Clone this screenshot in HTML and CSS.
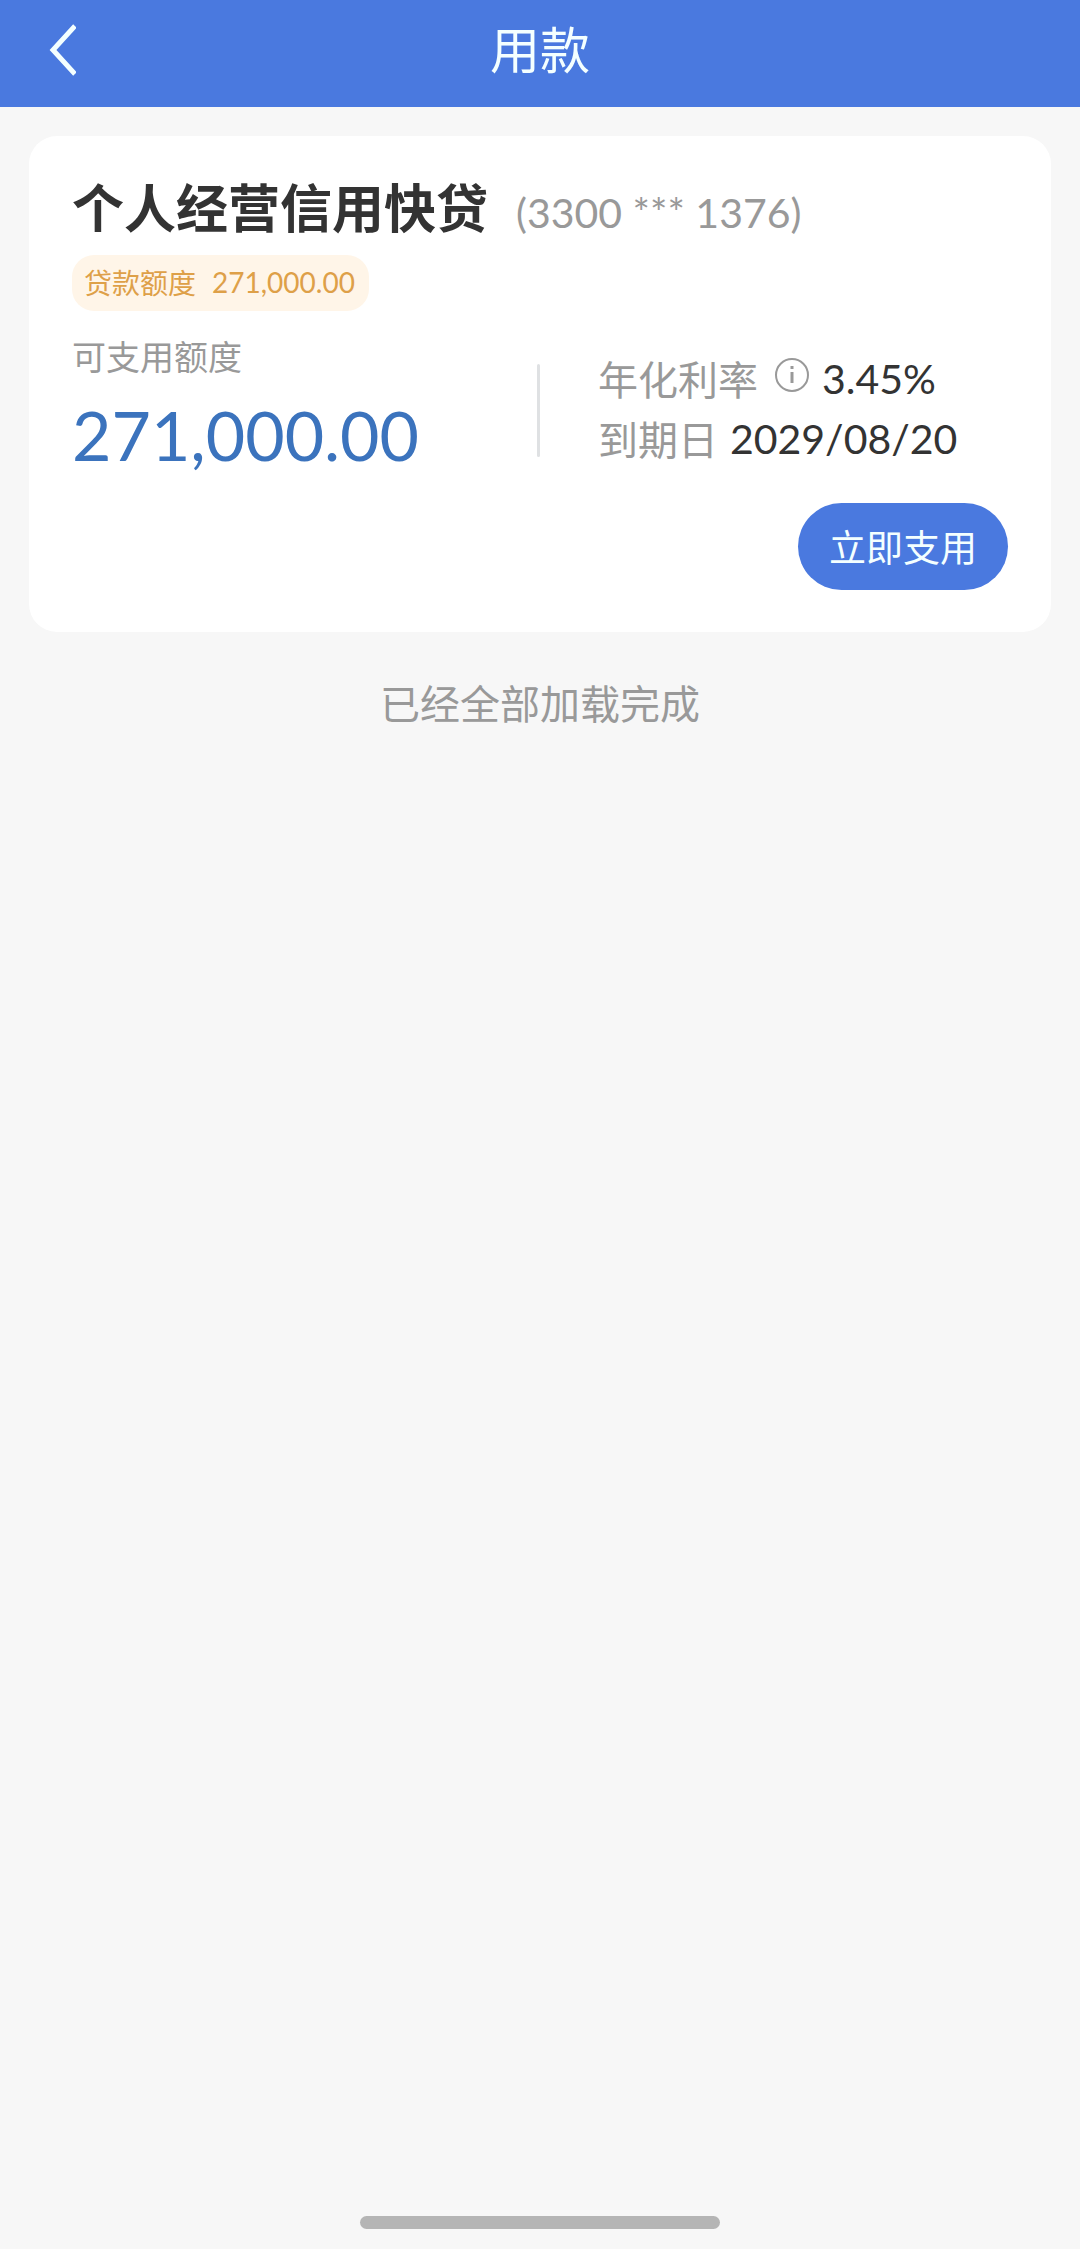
FILE: index.html
```html
<!DOCTYPE html>
<html lang="zh-CN">
<head>
    <meta charset="UTF-8">
    <meta name="viewport" content="width=device-width, initial-scale=1.0">
    <title>用款</title>
    <link rel="stylesheet" href="styles.css">
</head>
<body>
    <header class="nav-bar">
        <button class="back-btn" type="button" aria-label="返回">
            <svg width="28" height="54" viewBox="0 0 28 54" fill="none" stroke="currentColor" stroke-width="5">
                <path d="M27 3 L5 27 L27 51"/>
            </svg>
        </button>
        <h1 class="nav-title">用款</h1>
    </header>

    <main class="content">
        <section class="loan-card">
            <div class="loan-head">
                <h2 class="loan-name">个人经营信用快贷</h2>
                <span class="loan-account">(3300 *** 1376)</span>
            </div>
            <div class="loan-tag">
                <span>贷款额度</span>
                <span>271,000.00</span>
            </div>

            <div class="loan-body">
                <div class="available">
                    <p class="available-label">可支用额度</p>
                    <p class="available-amount">271,000.00</p>
                </div>
                <div class="loan-info">
                    <div class="info-row">
                        <span class="info-label">年化利率</span>
                        <button class="tip-btn" type="button" aria-label="利率说明">
                            <svg width="36" height="36" viewBox="0 0 36 36" fill="none" stroke="currentColor">
                                <circle cx="18" cy="18" r="16" stroke-width="2"/>
                                <path d="M18 15 V26" stroke-width="3"/>
                                <path d="M18 9 V12" stroke-width="3"/>
                            </svg>
                        </button>
                        <span class="info-value">3.45%</span>
                    </div>
                    <div class="info-row">
                        <span class="info-label">到期日</span>
                        <span class="info-value">2029/08/20</span>
                    </div>
                </div>
            </div>

            <div class="loan-action">
                <button class="use-btn" type="button">立即支用</button>
            </div>
        </section>

        <p class="load-end">已经全部加载完成</p>
    </main>

    <div class="home-bar"></div>
</body>
</html>
```
FILE: styles.css
```css
* {
    box-sizing: border-box;
    margin: 0;
    padding: 0;
}

body {
    display: flex;
    flex-direction: column;
    min-height: 100vh;
    background-color: #f7f7f7;
    color: #333;
    font-family: Lato, "Noto Sans CJK SC", sans-serif;
}

button {
    border: none;
    background: none;
    font-family: inherit;
    cursor: pointer;
}

/* top bar */
.nav-bar {
    display: grid;
    grid-template-columns: 1fr auto 1fr;
    align-items: center;
    padding: 0 48px 8px;
    height: 107px;
    background-color: #4a79df;
    color: #f4ffff;
}

.back-btn {
    display: flex;
    justify-self: start;
    color: inherit;
}

.nav-title {
    font-size: 50px;
    line-height: 60px;
    font-weight: 400;
}

/* loan card */
.content {
    padding: 29px;
}

.loan-card {
    padding: 42px 43px;
    background-color: #fff;
    border-radius: 28px;
}

.loan-head {
    display: flex;
    align-items: baseline;
    gap: 28px;
    line-height: 60px;
}

.loan-name {
    font-size: 52px;
    font-weight: 700;
}

.loan-account {
    font-size: 41px;
    color: #999;
}

.loan-tag {
    display: flex;
    align-items: center;
    gap: 16px;
    width: fit-content;
    height: 56px;
    margin-top: 12px;
    padding: 0 14px 2px 12px;
    border-radius: 22px;
    background-color: #fff5e8;
    color: #dea048;
    font-size: 28px;
}

.loan-body {
    display: grid;
    grid-template-columns: 1fr 1fr;
    align-items: end;
    margin-top: 24px;
}

.available-label {
    font-size: 34px;
    line-height: 44px;
    color: #999;
}

.available-amount {
    margin-top: 16px;
    padding-bottom: 4px;
    font-size: 68px;
    line-height: 80px;
    color: #3b73bd;
}

.loan-info {
    position: relative;
    padding: 0 0 11px 58px;
}

/* divider between amount and rate */
.loan-info::before {
    content: "";
    position: absolute;
    left: -3px;
    top: 16px;
    bottom: 22px;
    width: 3px;
    border-radius: 2px;
    background-color: #dfe1e3;
}

.info-row {
    display: flex;
    align-items: center;
    height: 60px;
    gap: 12px;
    white-space: nowrap;
}

.info-label {
    font-size: 40px;
    color: #999;
}

.tip-btn {
    display: flex;
    padding: 0 0 6px 4px;
    color: #999;
}

.info-value {
    font-size: 41px;
}

.loan-action {
    display: flex;
    justify-content: flex-end;
    margin-top: 24px;
}

.use-btn {
    height: 87px;
    padding: 0 31px 2px;
    border-radius: 44px;
    background-color: #4a79df;
    color: #f4ffff;
    font-size: 37px;
}

.load-end {
    margin-top: 42px;
    text-align: center;
    font-size: 40px;
    line-height: 60px;
    color: #999;
}

.home-bar {
    width: calc(100% / 3);
    height: 13px;
    margin: auto auto 20px;
    border-radius: 7px;
    background-color: #b5b5b5;
}
```
